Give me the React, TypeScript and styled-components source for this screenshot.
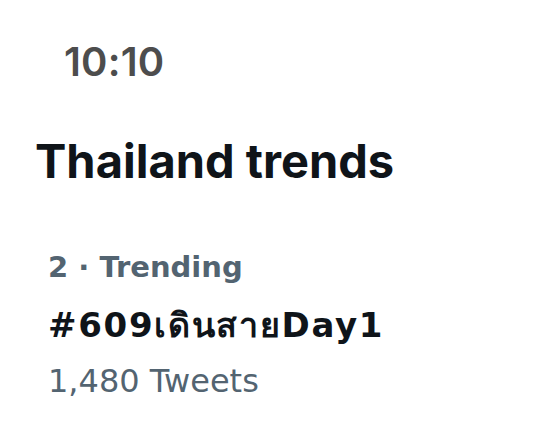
import React from 'react';
import styled, { createGlobalStyle } from 'styled-components';

const GlobalStyle = createGlobalStyle`
  html, body {
    margin: 0;
    padding: 0;
    background: #ffffff;
  }
  body {
    font-family: Inter, "Noto Sans", "DejaVu Sans", sans-serif;
  }
`;

const Screen = styled.div`
  width: 549px;
  height: 447px;
  background: #ffffff;
  display: flex;
  flex-direction: column;
  overflow: hidden;
`;

const StatusBar = styled.div`
  padding: 38px 0 0 64px;
  font-size: 40px;
  font-weight: 600;
  line-height: 48px;
  letter-spacing: 0.2px;
  color: #4d4d4d;
`;

const Header = styled.h1`
  margin: 47px 0 0 35px;
  font-size: 47px;
  font-weight: 700;
  line-height: 56px;
  color: #0f1419;
`;

const TrendItem = styled.div`
  margin-top: 60px;
  padding-left: 48px;
  display: flex;
  flex-direction: column;
  font-family: "DejaVu Sans", "Noto Sans", sans-serif;
`;

const Meta = styled.div<{ $bold?: boolean; $gap?: number }>`
  margin-top: ${(p) => p.$gap ?? 0}px;
  font-size: ${(p) => (p.$bold ? 29 : 32)}px;
  line-height: 36px;
  font-weight: ${(p) => (p.$bold ? 700 : 400)};
  color: #536471;
`;

const TrendName = styled.div`
  margin-top: 18px;
  font-size: 34px;
  line-height: 44px;
  font-weight: 700;
  letter-spacing: 1.7px;
  color: #0f1419;
`;

interface ITrend {
  rank: number;
  name: string;
  tweets: string;
}

const trend: ITrend = {
  rank: 2,
  name: '#609เดินสายDay1',
  tweets: '1,480 Tweets',
};

function App() {
  return (
    <Screen>
      <GlobalStyle />
      <StatusBar>10:10</StatusBar>
      <Header>Thailand trends</Header>
      <TrendItem>
        <Meta $bold>{trend.rank} · Trending</Meta>
        <TrendName>{trend.name}</TrendName>
        <Meta $gap={16}>{trend.tweets}</Meta>
      </TrendItem>
    </Screen>
  );
}

export default App;
